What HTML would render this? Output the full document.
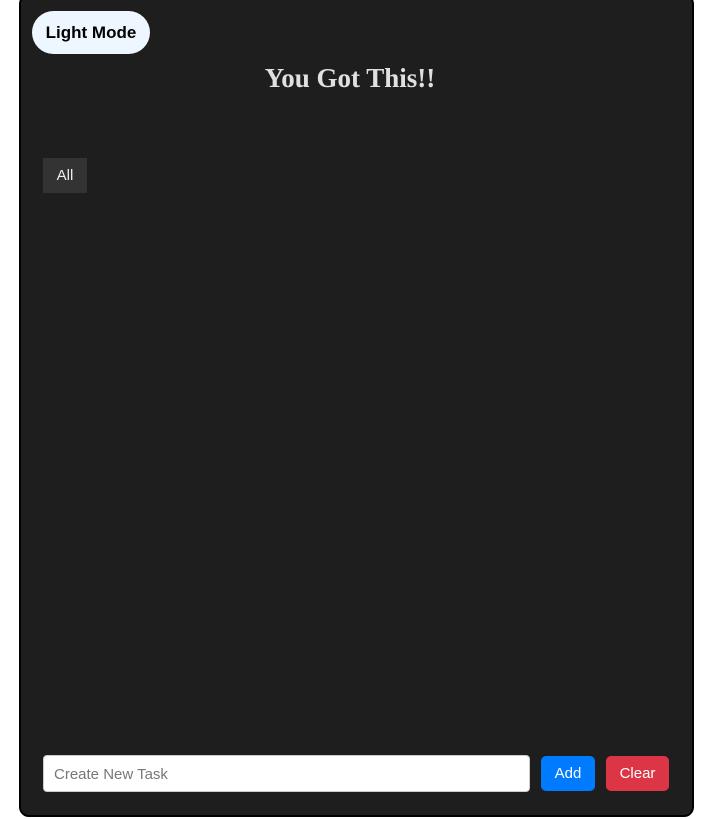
<!DOCTYPE html>
<html><head><style>
body{margin:0;background:#fff;width:717px;height:819px;overflow:hidden;font-family:"Liberation Sans",sans-serif;}
.c{position:absolute;left:19px;top:-6px;width:671px;height:819px;background:#1e1e1e;border:2px solid #000;border-radius:10px;}
.lm{position:absolute;left:32px;top:11px;width:118px;height:43px;border-radius:22px;background:#eef6ff;color:#000;font-weight:bold;font-size:17px;line-height:44px;text-align:center;}
h1{position:absolute;left:0;width:700px;top:63px;margin:0;text-align:center;font-family:"Liberation Serif",serif;font-size:27px;font-weight:bold;color:#e0e0e0;}
.all{position:absolute;left:43px;top:158px;width:44px;height:35px;background:#333;color:#eee;font-size:15px;line-height:36px;text-align:center;}
.in{position:absolute;left:43px;top:755px;background:#fff;border:1px solid #ccc;border-radius:4px;color:#777;font-size:15px;line-height:37px;padding-left:10px;box-sizing:border-box;width:487px;height:37px;}
.b{position:absolute;top:756px;height:35px;border-radius:5px;color:#fff;font-size:15px;line-height:36px;text-align:center;}
</style></head><body>
<div class="c"></div>
<div class="lm">Light Mode</div>
<h1>You Got This!!</h1>
<div class="all">All</div>
<div class="in">Create New Task</div>
<div class="b" style="left:541px;width:54px;background:#007bff">Add</div>
<div class="b" style="left:606px;width:63px;background:#dc3545">Clear</div>
</body></html>
